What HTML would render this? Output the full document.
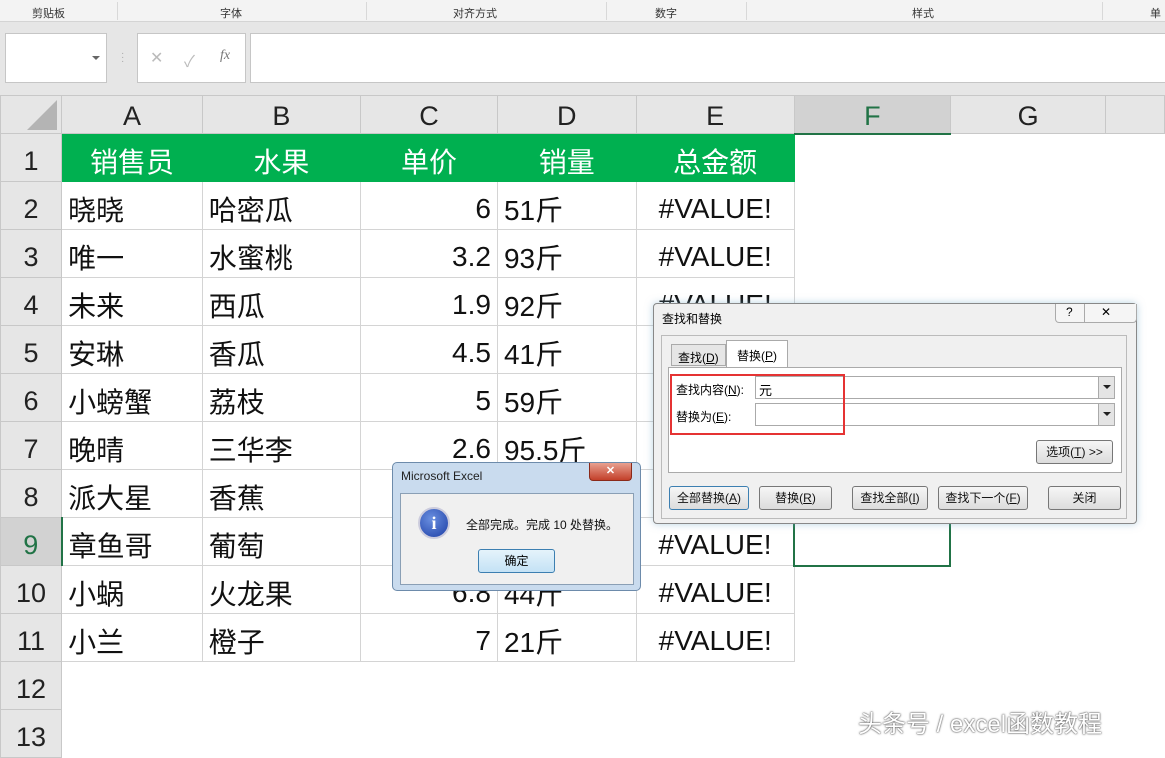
<!DOCTYPE html>
<html><head><meta charset="utf-8"><style>
*{box-sizing:border-box;margin:0;padding:0}
body{width:1165px;height:746px;overflow:hidden;background:#fff;position:relative;font-family:"Liberation Sans","Noto Sans CJK SC",sans-serif}
.abs{position:absolute}
.rib{left:0;top:0;width:1165px;height:22px;background:#f3f3f3;border-bottom:1px solid #d4d4d4;font-size:11px;color:#333}
.rib span{position:absolute;top:5px}
.rib i{position:absolute;top:2px;width:1px;height:18px;background:#d8d8d8}
.fb{left:0;top:22px;width:1165px;height:73px;background:#e6e6e6}
.box{background:#fff;border:1px solid #c6c6c6}
table{position:absolute;left:0;top:95px;border-collapse:collapse;table-layout:fixed}
td{border:1px solid #d4d4d4;font-size:28px;height:48px;padding:6px 6px 0;white-space:nowrap;overflow:hidden;color:#111}
tr.h td{height:38px;background:#e6e6e6;text-align:center;font-size:27px;border-color:#c8c8c8;color:#222;padding-top:4px}
td.rh{background:#e6e6e6;text-align:center;font-size:27px;padding:8px 0 0;border-color:#c8c8c8;color:#222}
tr.g td.d{background:#00b050;color:#fff;text-align:center;border-color:#00b050}
.r{text-align:right}.c{text-align:center}
.btn{position:absolute;height:24px;border:1px solid #777;border-radius:3px;background:linear-gradient(#f6f6f6,#dcdcdc);font-size:12px;text-align:center;line-height:22px;color:#111}
</style></head><body>
<div class="abs rib">
<span style="left:32px">剪贴板</span><span style="left:220px">字体</span><span style="left:453px">对齐方式</span><span style="left:655px">数字</span><span style="left:912px">样式</span><span style="left:1150px">单</span>
<i style="left:117px"></i><i style="left:366px"></i><i style="left:606px"></i><i style="left:746px"></i><i style="left:1102px"></i>
</div>
<div class="abs fb">
<div class="abs box" style="left:5px;top:11px;width:102px;height:50px"><div class="abs" style="left:86px;top:22px;border:4px solid transparent;border-top:4px solid #666"></div></div>
<div class="abs" style="left:121px;top:30px;color:#aaa;font-size:10px;line-height:4px">·<br>·<br>·</div>
<div class="abs box" style="left:137px;top:11px;width:109px;height:50px;color:#bbb;font-size:16px"><span class="abs" style="left:12px;top:14px">✕</span><span class="abs" style="left:46px;top:14px">✓</span><span class="abs" style="left:82px;top:14px;font-style:italic;font-family:'Liberation Serif';color:#777;font-size:14px">fx</span></div>
<div class="abs box" style="left:250px;top:11px;width:920px;height:50px"></div>
</div>
<table>
<colgroup><col style="width:62px"><col style="width:142px"><col style="width:160px"><col style="width:139px"><col style="width:140px"><col style="width:159px"><col style="width:160px"><col style="width:159px"><col style="width:60px"></colgroup>
<tr class="h"><td style="position:relative"><div class="abs" style="right:4px;bottom:3px;width:0;height:0;border-left:30px solid transparent;border-bottom:30px solid #b4b4b4"></div></td><td>A</td><td>B</td><td>C</td><td>D</td><td>E</td><td style="background:#d2d2d2;color:#217346;border-bottom:2px solid #217346">F</td><td>G</td><td></td></tr>
<tr class="g"><td class="rh">1</td><td class="d">销售员</td><td class="d">水果</td><td class="d">单价</td><td class="d">销量</td><td class="d">总金额</td><td style="border:none"></td><td style="border:none"></td><td style="border:none"></td></tr>
<tr><td class="rh">2</td><td>晓晓</td><td>哈密瓜</td><td class="r">6</td><td>51斤</td><td class="c">#VALUE!</td><td style="border:none"></td><td style="border:none"></td><td style="border:none"></td></tr>
<tr><td class="rh">3</td><td>唯一</td><td>水蜜桃</td><td class="r">3.2</td><td>93斤</td><td class="c">#VALUE!</td><td style="border:none"></td><td style="border:none"></td><td style="border:none"></td></tr>
<tr><td class="rh">4</td><td>未来</td><td>西瓜</td><td class="r">1.9</td><td>92斤</td><td class="c">#VALUE!</td><td style="border:none"></td><td style="border:none"></td><td style="border:none"></td></tr>
<tr><td class="rh">5</td><td>安琳</td><td>香瓜</td><td class="r">4.5</td><td>41斤</td><td class="c">#VALUE!</td><td style="border:none"></td><td style="border:none"></td><td style="border:none"></td></tr>
<tr><td class="rh">6</td><td>小螃蟹</td><td>荔枝</td><td class="r">5</td><td>59斤</td><td class="c">#VALUE!</td><td style="border:none"></td><td style="border:none"></td><td style="border:none"></td></tr>
<tr><td class="rh">7</td><td>晚晴</td><td>三华李</td><td class="r">2.6</td><td>95.5斤</td><td class="c">#VALUE!</td><td style="border:none"></td><td style="border:none"></td><td style="border:none"></td></tr>
<tr><td class="rh">8</td><td>派大星</td><td>香蕉</td><td class="r">5.6</td><td>74斤</td><td class="c">#VALUE!</td><td style="border:none"></td><td style="border:none"></td><td style="border:none"></td></tr>
<tr><td class="rh" style="background:#d2d2d2;color:#217346;border-right:2px solid #217346">9</td><td>章鱼哥</td><td>葡萄</td><td class="r">3</td><td>66斤</td><td class="c">#VALUE!</td><td style="border:2px solid #217346"></td><td style="border:none"></td><td style="border:none"></td></tr>
<tr><td class="rh">10</td><td>小蜗</td><td>火龙果</td><td class="r">6.8</td><td>44斤</td><td class="c">#VALUE!</td><td style="border:none"></td><td style="border:none"></td><td style="border:none"></td></tr>
<tr><td class="rh">11</td><td>小兰</td><td>橙子</td><td class="r">7</td><td>21斤</td><td class="c">#VALUE!</td><td style="border:none"></td><td style="border:none"></td><td style="border:none"></td></tr>
<tr><td class="rh">12</td><td style="border:none"></td><td style="border:none"></td><td style="border:none"></td><td style="border:none"></td><td style="border:none"></td><td style="border:none"></td><td style="border:none"></td><td style="border:none"></td></tr>
<tr><td class="rh">13</td><td style="border:none"></td><td style="border:none"></td><td style="border:none"></td><td style="border:none"></td><td style="border:none"></td><td style="border:none"></td><td style="border:none"></td><td style="border:none"></td></tr>
</table>

<div class="abs" style="left:653px;top:303px;width:484px;height:221px;background:#f0f0f0;border:1px solid #888;border-radius:4px;box-shadow:0 0 8px rgba(120,170,200,.5)">
<div class="abs" style="left:8px;top:6px;font-size:12px">查找和替换</div>
<div class="abs" style="left:401px;top:0;width:82px;height:19px;border:1px solid #aaa;border-top:none;border-radius:0 0 4px 4px;background:#f5f5f5;font-size:12px"><span class="abs" style="left:10px;top:1px">?</span><span class="abs" style="left:28px;top:0;width:1px;height:18px;background:#aaa"></span><span class="abs" style="left:45px;top:1px">✕</span></div>
<div class="abs" style="left:7px;top:31px;width:466px;height:184px;border:1px solid #bbb"></div>
<div class="abs" style="left:17px;top:40px;width:55px;height:22px;border:1px solid #aaa;background:#e6e6e6;font-size:12px;padding:4px 0 0 6px">查找(<u>D</u>)</div>
<div class="abs" style="left:72px;top:36px;width:62px;height:28px;border:1px solid #aaa;border-bottom:none;background:#fff;font-size:12px;padding:6px 0 0 10px">替换(<u>P</u>)</div>
<div class="abs" style="left:14px;top:63px;width:454px;height:106px;border:1px solid #aaa;background:#fff"></div>
<div class="abs" style="left:22px;top:77px;font-size:12px">查找内容(<u>N</u>):</div>
<div class="abs" style="left:22px;top:104px;font-size:12px">替换为(<u>E</u>):</div>
<div class="abs" style="left:101px;top:72px;width:360px;height:23px;border:1px solid #aaa;font-size:13px;padding:3px 0 0 3px">元</div>
<div class="abs" style="left:101px;top:99px;width:360px;height:23px;border:1px solid #aaa"></div>
<div class="abs" style="left:444px;top:73px;width:16px;height:21px;background:#e4e4e4;border-left:1px solid #aaa"><div class="abs" style="left:4px;top:8px;border:4px solid transparent;border-top:4px solid #222"></div></div>
<div class="abs" style="left:444px;top:100px;width:16px;height:21px;background:#e4e4e4;border-left:1px solid #aaa"><div class="abs" style="left:4px;top:8px;border:4px solid transparent;border-top:4px solid #222"></div></div>
<div class="abs" style="left:16px;top:70px;width:175px;height:61px;border:2px solid #e53333"></div>
<div class="btn" style="left:382px;top:136px;width:77px">选项(<u>T</u>) &gt;&gt;</div>
<div class="btn" style="left:15px;top:182px;width:80px;border-color:#3c7fb1">全部替换(<u>A</u>)</div>
<div class="btn" style="left:105px;top:182px;width:73px">替换(<u>R</u>)</div>
<div class="btn" style="left:198px;top:182px;width:76px">查找全部(<u>I</u>)</div>
<div class="btn" style="left:284px;top:182px;width:90px">查找下一个(<u>F</u>)</div>
<div class="btn" style="left:394px;top:182px;width:73px">关闭</div>
</div>

<div class="abs" style="left:392px;top:462px;width:249px;height:129px;background:#c9dbee;border:1px solid #6d8bab;border-radius:5px">
<div class="abs" style="left:8px;top:6px;font-size:12px;color:#222">Microsoft Excel</div>
<div class="abs" style="left:196px;top:0;width:43px;height:18px;background:linear-gradient(#e8a090,#c3402a);border:1px solid #8a2a1a;border-top:none;border-radius:0 0 4px 4px;color:#fff;font-size:11px;text-align:center;line-height:17px;font-weight:bold">✕</div>
<div class="abs" style="left:7px;top:30px;width:234px;height:92px;background:#f0f0f0;border:1px solid #8a9fb5"></div>
<div class="abs" style="left:25px;top:44px;width:32px;height:32px;border-radius:50%;background:radial-gradient(circle at 40% 35%,#6a8fe0,#1c3ea6);border:2px solid #ccd;color:#fff;font:bold 18px 'Liberation Serif';text-align:center;line-height:28px">i</div>
<div class="abs" style="left:73px;top:53px;font-size:12px;color:#111">全部完成。完成 10 处替换。</div>
<div class="abs" style="left:85px;top:86px;width:77px;height:24px;border:1px solid #3c7fb1;border-radius:3px;background:linear-gradient(#e5f3fb,#c4e2f5);font-size:12px;text-align:center;line-height:22px">确定</div>
</div>

<div class="abs" style="left:858px;top:704px;font-size:24px;color:#fff;text-shadow:0 0 2px #555,0 0 1px #333">头条号 / excel函数教程</div>
</body></html>
